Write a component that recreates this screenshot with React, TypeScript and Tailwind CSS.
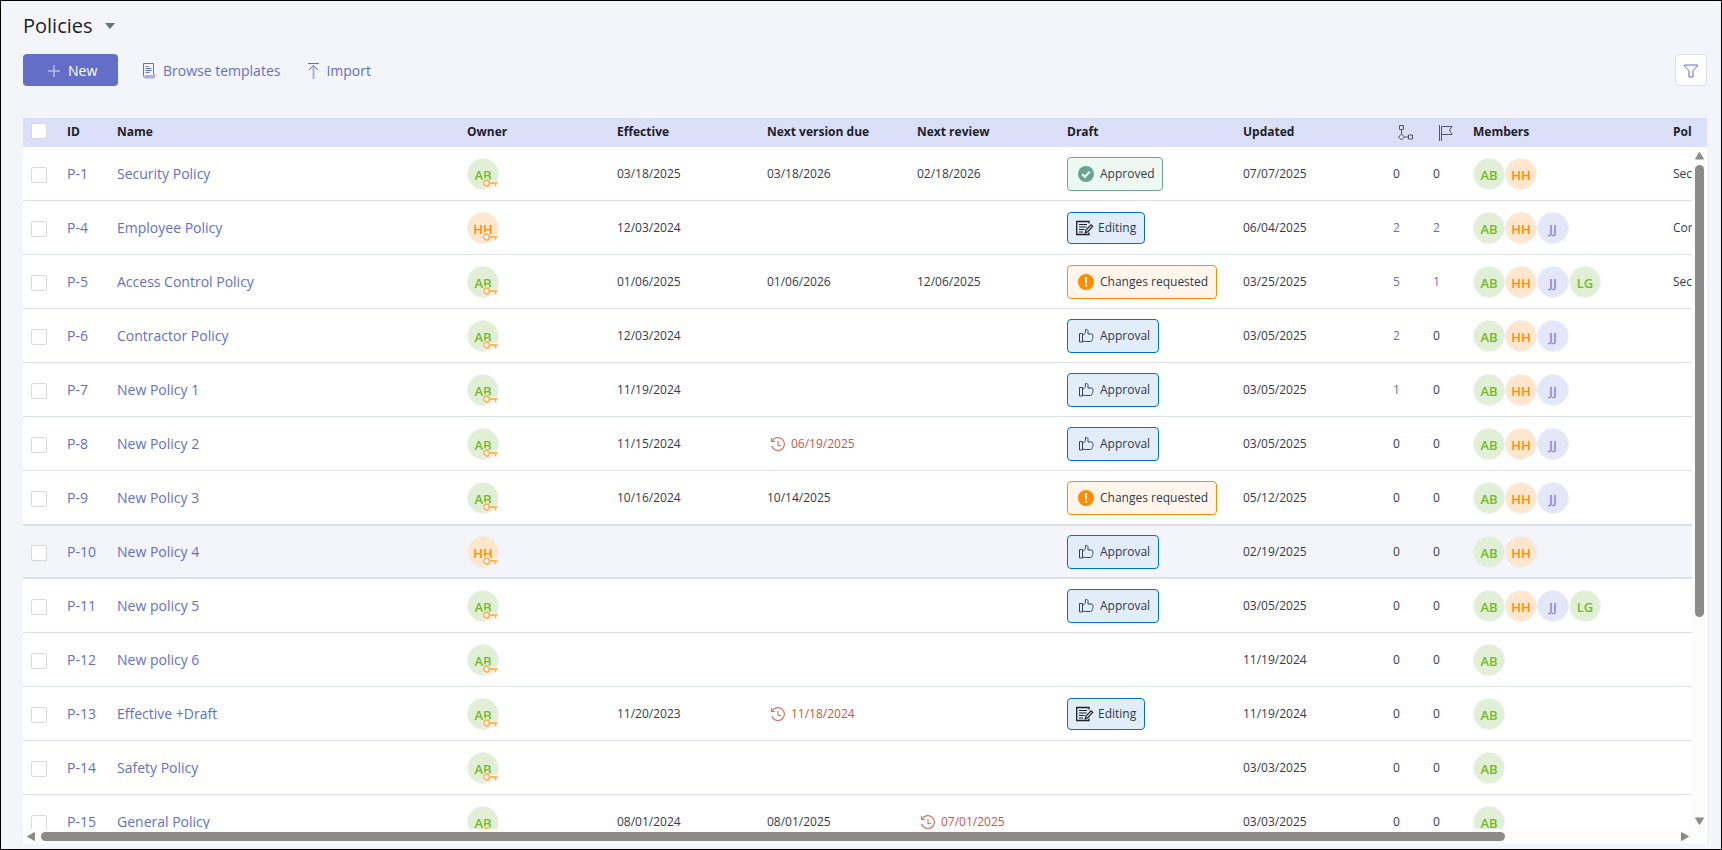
import type { ReactNode } from "react";

type Person = "AB" | "HH" | "JJ" | "LG";
type DraftState = "approved" | "editing" | "changes" | "approval";

interface Policy {
  id: string;
  name: string;
  owner: Person;
  effective?: string;
  nextVersion?: string;
  nextReview?: string;
  overdue?: "version" | "review";
  draft?: DraftState;
  updated: string;
  workflows: number;
  issues: number;
  members: Person[];
  type?: string;
}

const POLICIES: Policy[] = [
  { id: "P-1", name: "Security Policy", owner: "AB", effective: "03/18/2025", nextVersion: "03/18/2026", nextReview: "02/18/2026", draft: "approved", updated: "07/07/2025", workflows: 0, issues: 0, members: ["AB", "HH"], type: "Security" },
  { id: "P-4", name: "Employee Policy", owner: "HH", effective: "12/03/2024", draft: "editing", updated: "06/04/2025", workflows: 2, issues: 2, members: ["AB", "HH", "JJ"], type: "Corporate" },
  { id: "P-5", name: "Access Control Policy", owner: "AB", effective: "01/06/2025", nextVersion: "01/06/2026", nextReview: "12/06/2025", draft: "changes", updated: "03/25/2025", workflows: 5, issues: 1, members: ["AB", "HH", "JJ", "LG"], type: "Security" },
  { id: "P-6", name: "Contractor Policy", owner: "AB", effective: "12/03/2024", draft: "approval", updated: "03/05/2025", workflows: 2, issues: 0, members: ["AB", "HH", "JJ"] },
  { id: "P-7", name: "New Policy 1", owner: "AB", effective: "11/19/2024", draft: "approval", updated: "03/05/2025", workflows: 1, issues: 0, members: ["AB", "HH", "JJ"] },
  { id: "P-8", name: "New Policy 2", owner: "AB", effective: "11/15/2024", nextVersion: "06/19/2025", overdue: "version", draft: "approval", updated: "03/05/2025", workflows: 0, issues: 0, members: ["AB", "HH", "JJ"] },
  { id: "P-9", name: "New Policy 3", owner: "AB", effective: "10/16/2024", nextVersion: "10/14/2025", draft: "changes", updated: "05/12/2025", workflows: 0, issues: 0, members: ["AB", "HH", "JJ"] },
  { id: "P-10", name: "New Policy 4", owner: "HH", draft: "approval", updated: "02/19/2025", workflows: 0, issues: 0, members: ["AB", "HH"] },
  { id: "P-11", name: "New policy 5", owner: "AB", draft: "approval", updated: "03/05/2025", workflows: 0, issues: 0, members: ["AB", "HH", "JJ", "LG"] },
  { id: "P-12", name: "New policy 6", owner: "AB", updated: "11/19/2024", workflows: 0, issues: 0, members: ["AB"] },
  { id: "P-13", name: "Effective +Draft", owner: "AB", effective: "11/20/2023", nextVersion: "11/18/2024", overdue: "version", draft: "editing", updated: "11/19/2024", workflows: 0, issues: 0, members: ["AB"] },
  { id: "P-14", name: "Safety Policy", owner: "AB", updated: "03/03/2025", workflows: 0, issues: 0, members: ["AB"] },
  { id: "P-15", name: "General Policy", owner: "AB", effective: "08/01/2024", nextVersion: "08/01/2025", nextReview: "07/01/2025", overdue: "review", updated: "03/03/2025", workflows: 0, issues: 0, members: ["AB"] },
];

const HOVERED_ID = "P-10";

const PERSON_STYLES: Record<Person, string> = {
  AB: "bg-[#e1f0d4] text-[#76b82a]",
  HH: "bg-[#ffe6cc] text-[#ff8c00]",
  JJ: "bg-[#e4e7f9] text-[#8489e0]",
  LG: "bg-[#e1f0d4] text-[#76b82a]",
};

function KeyIcon() {
  return (
    <svg width="16" height="10" viewBox="0 0 16 10" fill="none" className="absolute right-0 bottom-px">
      <path d="M7.5 5H15.5M13.5 5v4" stroke="#fff" strokeWidth="3.5" />
      <circle cx="4.5" cy="5" r="3" stroke="#fff" strokeWidth="3.5" />
      <circle cx="4.5" cy="5" r="3" fill="#fff" stroke="#ffb55a" strokeWidth="1.8" />
      <path d="M7.5 5H15.5M13.5 5v3.5" stroke="#ffb55a" strokeWidth="1.8" />
    </svg>
  );
}

function Avatar({ person, owner = false }: { person: Person; owner?: boolean }) {
  return (
    <span
      className={[
        "relative flex size-8 items-center justify-center rounded-full border border-[#eff0f6] pt-0.5 text-[13px] leading-4 font-semibold",
        PERSON_STYLES[person],
      ].join(" ")}
    >
      {person}
      {owner ? <KeyIcon /> : null}
    </span>
  );
}

function ApprovedIcon() {
  return (
    <svg width="16" height="16" viewBox="0 0 16 16" fill="none">
      <circle cx="8" cy="8" r="8" fill="#6aa593" />
      <path d="M4.2 8.2l2.7 2.6 4.9-5.2" stroke="#fff" strokeWidth="2" />
    </svg>
  );
}

function ChangesIcon() {
  return (
    <svg width="16" height="16" viewBox="0 0 16 16">
      <circle cx="8" cy="8" r="8" fill="#ff8c00" />
      <path d="M6.8 3h2.4l-.4 6.600H7.200z" fill="#fff" />
      <circle cx="8" cy="11.8" r="1.2" fill="#fff" />
    </svg>
  );
}

function EditingIcon() {
  return (
    <svg width="18" height="16" viewBox="0 0 18 16" fill="none" stroke="#1d2129">
      <path d="M13 3.500V1.500H.7v13H13v-2" strokeWidth="1.300" />
      <path d="M3 4.500h8M3 7h7.500M3 9.500h5.500M3 12h4" strokeWidth="1.200" />
      <path d="M9.300 12.700l.7-2.700 5-5.200 1.700 1.600-5 5.300z" strokeWidth="1.200" />
    </svg>
  );
}

function ThumbIcon() {
  return (
    <svg width="16" height="16" viewBox="0 0 16 16" fill="none" stroke="#3a4354">
      <path d="M1.500 5.500h3v8.500h-3z" />
      <path d="M4.500 7.500c1.800-.8 3-2.300 3-4.500V1.500c1.500-.5 2.500.5 2.500 2V6h3.500c1.200 0 1.700 1.200 1.100 2 .7.700.6 1.600-.1 2.100.4.800.1 1.500-.6 1.900.1.900-.4 1.500-1.400 1.500H7.500c-1.200 0-1.800-.5-3-.5z" />
    </svg>
  );
}

const DRAFT_BADGES: Record<DraftState, { label: string; icon: ReactNode; className: string }> = {
  approved: { label: "Approved", icon: <ApprovedIcon />, className: "h-[34px] gap-1.5 pr-2 pl-2.5 border-[#6aa593] bg-[#edf8f2]" },
  editing: { label: "Editing", icon: <EditingIcon />, className: "h-8 gap-1 px-2 border-[#0072c6] bg-[#e1edf9]" },
  changes: { label: "Changes requested", icon: <ChangesIcon />, className: "h-[34px] gap-1.5 pr-2 pl-2.5 border-[#ff8c00] bg-[#fff5eb]" },
  approval: { label: "Approval", icon: <ThumbIcon />, className: "h-[34px] gap-1.5 pr-2 pl-2.5 border-[#0072c6] bg-[#e1edf9]" },
};

function DraftBadge({ state }: { state: DraftState }) {
  const badge = DRAFT_BADGES[state];
  return (
    <span className={["flex w-fit items-center rounded border", badge.className].join(" ")}>
      {badge.icon}
      {badge.label}
    </span>
  );
}

function OverdueDate({ date }: { date: string }) {
  return (
    <span className="flex items-center gap-[5px] pl-[3px] text-[#c5564a]">
      <svg width="16" height="16" viewBox="0 0 16 16" fill="none" stroke="#d07a6e">
        <path d="M2.200 5A6.500 6.500 0 1 1 1.700 10" strokeWidth="1.300" />
        <path d="M1.500 2v3.500h3.500M8 5v4.500h3" strokeWidth="1.200" />
      </svg>
      {date}
    </span>
  );
}

function DateCell({ date, overdue }: { date?: string; overdue?: boolean }) {
  return <td className="px-2">{date && overdue ? <OverdueDate date={date} /> : date}</td>;
}

function CountCell({ count }: { count: number }) {
  return (
    <td className="px-2">
      {count > 0 ? (
        <a href="#" className="text-[#636fc6]">
          {count}
        </a>
      ) : (
        count
      )}
    </td>
  );
}

function RowCheckbox({ label }: { label: string }) {
  return (
    <input
      type="checkbox"
      aria-label={label}
      className="block size-4 appearance-none rounded-xs border border-[#d9d9d9] bg-white checked:bg-[#636fc6]"
    />
  );
}

function PolicyRow({ policy }: { policy: Policy }) {
  const hovered = policy.id === HOVERED_ID;
  return (
    <tr
      className={[
        "h-[54px] [&>td]:border-b [&>td]:border-[#dddfe9]",
        hovered ? "bg-[#f4f5fb] [&>td]:shadow-[inset_0_1px_0_#dddfe9,inset_0_-1px_0_#dddfe9]" : "",
      ].join(" ")}
    >
      <td className="pt-[3px] pl-2">
        <RowCheckbox label={`Select ${policy.id}`} />
      </td>
      <td className="px-2 text-sm">
        <a href="#" className="text-[#636fc6]">
          {policy.id}
        </a>
      </td>
      <td className="px-2 text-sm">
        <a href="#" className="text-[#636fc6]">
          {policy.name}
        </a>
      </td>
      <td className="px-2">
        <Avatar person={policy.owner} owner />
      </td>
      <DateCell date={policy.effective} />
      <DateCell date={policy.nextVersion} overdue={policy.overdue === "version"} />
      <DateCell date={policy.nextReview} overdue={policy.overdue === "review"} />
      <td className="px-2">{policy.draft ? <DraftBadge state={policy.draft} /> : null}</td>
      <DateCell date={policy.updated} />
      <CountCell count={policy.workflows} />
      <CountCell count={policy.issues} />
      <td className="px-2">
        <div className="flex">
          {policy.members.map((person) => (
            <Avatar key={person} person={person} />
          ))}
        </div>
      </td>
      <td className="px-2">{policy.type}</td>
    </tr>
  );
}

function PolicyTable() {
  return (
    <table className="w-[1884px] table-fixed border-separate border-spacing-0 text-left text-xs text-[#2f3a4f]">
      <colgroup>
        <col className="w-9" />
        <col className="w-[50px]" />
        <col className="w-[350px]" />
        <col className="w-[150px]" />
        <col className="w-[150px]" />
        <col className="w-[150px]" />
        <col className="w-[150px]" />
        <col className="w-[176px]" />
        <col className="w-[150px]" />
        <col className="w-10" />
        <col className="w-10" />
        <col className="w-[200px]" />
        <col />
      </colgroup>
      <thead>
        <tr className="h-[29px] bg-[#dbdff8] text-[#1d2129]">
          <th className="pb-[3px] pl-2">
            <RowCheckbox label="Select all policies" />
          </th>
          <th className="px-2 pb-0.5">ID</th>
          <th className="px-2 pb-0.5">Name</th>
          <th className="px-2 pb-0.5">Owner</th>
          <th className="px-2 pb-0.5">Effective</th>
          <th className="px-2 pb-0.5">Next version due</th>
          <th className="px-2 pb-0.5">Next review</th>
          <th className="px-2 pb-0.5">Draft</th>
          <th className="px-2 pb-0.5">Updated</th>
          <th className="pl-3" aria-label="Workflows">
            <svg width="17" height="16" viewBox="0 0 17 16" fill="none" stroke="#4f5869">
              <path d="M2.500.5h4v4h-4zM11.500 10h4v4h-4zM4.500 4.500V9M7.500 12h4M4.500 9l3 3-3 3-3-3z" />
            </svg>
          </th>
          <th className="pl-3.5" aria-label="Issues">
            <svg width="14" height="16" viewBox="0 0 14 16" fill="none" stroke="#4f5869">
              <path d="M.5 0v16M2.500 16V1.500H13L10.500 5 13 9.500H2.500" />
            </svg>
          </th>
          <th className="px-2 pb-0.5">Members</th>
          <th className="px-2 pb-0.5">Policy type</th>
        </tr>
      </thead>
      <tbody>
        {POLICIES.map((policy) => (
          <PolicyRow key={policy.id} policy={policy} />
        ))}
      </tbody>
    </table>
  );
}

function ScrollArrow({ path }: { path: string }) {
  return (
    <svg width="9" height="9" viewBox="0 0 9 9" className="shrink-0">
      <path d={path} fill="#8b8b8b" stroke="#8b8b8b" strokeLinejoin="round" />
    </svg>
  );
}

export default function App() {
  return (
    <div className="flex h-screen flex-col border border-black bg-[#f4f5fb] pr-3.5 pb-[5px] pl-[22px] font-['Open_Sans',sans-serif]">
      <header className="flex items-center gap-3 pt-[9px]">
        <h1 className="text-xl leading-8 text-[#1d2129]">Policies</h1>
        <button type="button" aria-label="Switch view">
          <svg width="10" height="6" viewBox="0 0 10 6">
            <path d="M0 0h10L5 6z" fill="#65747b" />
          </svg>
        </button>
      </header>

      <div className="flex items-center pt-3 text-sm text-[#636fc6]">
        <button type="button" className="flex h-8 w-[95px] items-center gap-2 rounded bg-[#636fc6] pt-0.5 pl-[25px] text-white">
          <svg width="12" height="12" viewBox="0 0 12 12" fill="none" stroke="#b9bfe6" strokeWidth="1.5">
            <path d="M6 0v12M0 6h12" />
          </svg>
          <span className="font-medium">New</span>
        </button>
        <button type="button" className="ml-[25px] flex h-8 items-center gap-[7px] pt-0.5">
          <svg width="13" height="16" viewBox="0 0 13 16" fill="none" stroke="#636fc6">
            <path d="M10.500 11.500V.5H.5v12c0 1.500.5 2 1.500 2" />
            <path d="M2.500 3.500h3M2.500 5.500h6M2.500 7.500h6M2.500 9.500h4" />
            <path d="M2 12.500h8.500v-1h1.500V14l-1 1H2z" fill="#a9b0e2" stroke="#a9b0e2" />
          </svg>
          Browse templates
        </button>
        <button type="button" className="ml-7 flex h-8 items-center gap-[7px] pt-0.5">
          <svg width="11" height="16" viewBox="0 0 11 16" fill="none">
            <path d="M5.500 3v13" stroke="#a9b0e2" strokeWidth="2" />
            <path d="M0 .5h11M1 7l4.500-4.500L10 7" stroke="#636fc6" />
          </svg>
          Import
        </button>
        <button
          type="button"
          aria-label="Filter"
          className="ml-auto flex size-8 items-center justify-center rounded border border-[#dddfe9] bg-white pt-0.5"
        >
          <svg width="14" height="14" viewBox="0 0 14 14" fill="none" stroke="#636fc6">
            <path d="M.5 1h13v1L9 6.500V13H5V6.500L.5 2z" />
          </svg>
        </button>
      </div>

      <main className="mt-8 flex min-h-0 flex-1 flex-col bg-white">
        <div className="flex min-h-0 flex-1">
          <div className="min-w-0 flex-1 overflow-hidden">
            <PolicyTable />
          </div>
          <div className="flex w-[15px] flex-col">
            <div className="h-[29px] bg-[#dbdff8]" />
            <div className="flex min-h-0 flex-1 flex-col items-center gap-[5px] bg-[#fcfcfc] py-1">
              <ScrollArrow path="M4.500 1.500L8.500 8H.5z" />
              <div className="min-h-0 w-full flex-1">
                <div className="mx-auto h-7/10 w-[9px] rounded-full bg-[#8b8b8b]" />
              </div>
              <ScrollArrow path="M4.500 8.500L8.500 2H.5z" />
            </div>
          </div>
        </div>
        <div className="flex h-[15px] items-center gap-[5px] bg-[#fcfcfc] pr-[18px] pl-1">
          <ScrollArrow path="M.5 4.500L7.500.5v8z" />
          <div className="flex-1">
            <div className="h-[9px] w-43/48 rounded-full bg-[#8b8b8b]" />
          </div>
          <ScrollArrow path="M8.500 4.500L1.500.5v8z" />
        </div>
      </main>
    </div>
  );
}
